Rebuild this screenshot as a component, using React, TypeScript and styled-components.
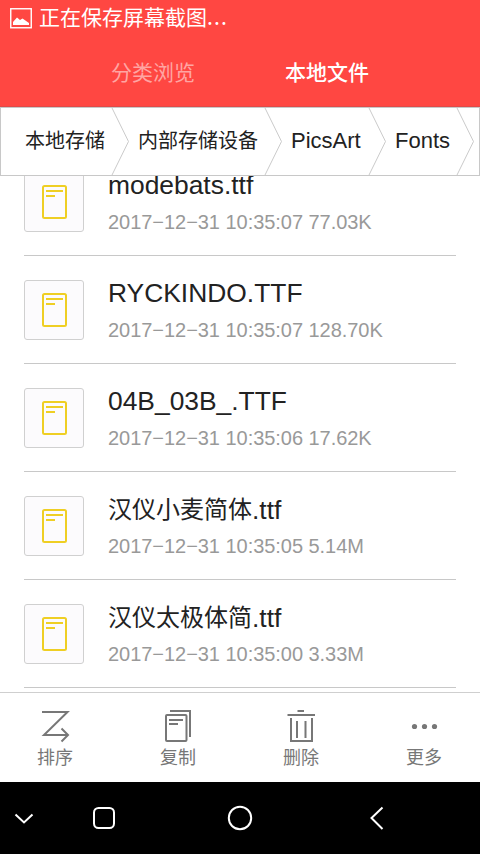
import React from "react";
import styled, { createGlobalStyle } from "styled-components";

const GlobalStyle = createGlobalStyle`
  * { box-sizing: border-box; }
  body { margin: 0; background: #fff; }
`;

const Screen = styled.div`
  width: 480px;
  height: 854px;
  display: flex;
  flex-direction: column;
  overflow: hidden;
  background: #fff;
  color: #222;
  font-family: "Liberation Sans", "Noto Sans CJK SC", sans-serif;
  white-space: nowrap;
`;

const Header = styled.header`
  flex: none;
  height: 107px;
  background: #ff4742;
  border-bottom: 1px solid #e04a48;
  color: #fff;
  font-family: "Noto Sans CJK SC", sans-serif;
  font-size: 21px;
`;

const StatusBar = styled.div`
  height: 35px;
  display: flex;
  align-items: flex-start;
  gap: 7px;
  padding-left: 10px;
  line-height: 32px;

  svg {
    margin-top: 8px;
  }
`;

const Dots = styled.span`
  letter-spacing: 1.2px;
`;

const Tabs = styled.nav`
  display: flex;
  gap: 90px;
  padding-left: 111px;
  line-height: 72px;
`;

const Tab = styled.span<{ $active?: boolean }>`
  width: 84px;
  color: ${(p) => (p.$active ? "#fff" : "#ffa5a2")};
  font-weight: ${(p) => (p.$active ? 500 : 400)};
`;

const Breadcrumb = styled.div`
  flex: none;
  height: 69px;
  display: flex;
  gap: 9px;
  border: 1px solid #c8c8c8;
  padding-left: 24px;
`;

const Crumb = styled.div<{ $width: number }>`
  flex: none;
  display: flex;
  justify-content: space-between;
  width: ${(p) => p.$width}px;
  line-height: 66px;
`;

const Latin = styled.span<{ $size: number }>`
  font-family: "Liberation Sans", sans-serif;
  font-size: ${(p) => p.$size}px;
`;

const Han = styled.span<{ $size: number }>`
  font-family: "Noto Sans CJK SC", sans-serif;
  font-size: ${(p) => p.$size}px;
  position: relative;
  top: -1px;
`;

const List = styled.main`
  flex: none;
  height: 516px;
  overflow: hidden;
  padding: 0 24px;
`;

const Rows = styled.div`
  margin-top: -28px;
`;

const Row = styled.div`
  height: 108px;
  display: flex;
  gap: 24px;
  padding-top: 24px;
  border-bottom: 1px solid #c8c8c8;
`;

const Thumb = styled.div`
  flex: none;
  width: 60px;
  height: 60px;
  border: 1px solid #d0d0d0;
  border-radius: 3px;
  background: #fcfbfd;
  display: flex;
  align-items: center;
  justify-content: center;
`;

const Info = styled.div`
  display: flex;
  flex-direction: column;
`;

const Name = styled.div`
  height: 30px;
  margin-top: -2px;
  line-height: 30px;
`;

const Meta = styled.div`
  margin-top: 10px;
  height: 24px;
  line-height: 24px;
  font-size: 20px;
  letter-spacing: -0.04px;
  color: #999;
`;

const Toolbar = styled.footer`
  flex: none;
  height: 90px;
  border-top: 1px solid #cfcfcf;
  display: flex;
  justify-content: space-between;
  padding: 15px 34px 0 33px;
`;

const Tool = styled.div`
  width: 44px;
  display: flex;
  flex-direction: column;
  align-items: center;
  color: #777;
  font-family: "Noto Sans CJK SC", sans-serif;
  font-size: 18px;
  line-height: 24px;
`;

const NavBar = styled.div`
  flex: none;
  height: 72px;
  background: #000;
  display: flex;
  align-items: center;
  padding-left: 9px;
`;

const NavButton = styled.div<{ $gap: number }>`
  flex: none;
  width: 30px;
  height: 30px;
  margin-right: ${(p) => p.$gap}px;
`;

const NavIcon = ({ children }: { children: React.ReactNode }) => (
  <svg width="30" height="30" viewBox="0 0 30 30" fill="none" stroke="#fff" strokeWidth="2" display="block">
    {children}
  </svg>
);

const ToolIcon = ({ children }: { children: React.ReactNode }) => (
  <svg width="36" height="36" viewBox="0 0 36 36" fill="none" stroke="#777" strokeWidth="2" display="block">
    {children}
  </svg>
);

const Chevron = () => (
  <svg width="18" height="67" viewBox="0 0 18 67" fill="none" stroke="#cacaca" strokeWidth="1" display="block">
    <path d="M1 0 L17.5 33.5 L1 67" />
  </svg>
);

const FileIcon = () => (
  <svg width="26" height="36" viewBox="0 0 26 36" fill="none" stroke="#efcf24" strokeWidth="2" display="block">
    <rect x="2" y="2" width="23" height="32" rx="1.5" />
    <path d="M5 7H22M5 12H14" />
  </svg>
);

const PictureIcon = () => (
  <svg width="22" height="21" viewBox="0 0 22 21" display="block">
    <rect x="0.75" y="0.75" width="20.5" height="19" fill="none" stroke="#fff" strokeWidth="1.4" />
    <path d="M3 17V14L7 9.5L10 12L12.5 10.5L19 15V17Z" fill="#fff" />
  </svg>
);

const isHan = (s: string) => /[\u4e00-\u9fff]/.test(s);

const Mixed = ({ text, size }: { text: string; size: number }) => (
  <>
    {(text.match(/[\u4e00-\u9fff]+|[^\u4e00-\u9fff]+/g) ?? []).map((part) =>
      isHan(part) ? (
        <Han key={part} $size={size}>{part}</Han>
      ) : (
        <Latin key={part} $size={size * 1.1}>{part}</Latin>
      )
    )}
  </>
);

const crumbs = [
  { label: "本地存储", width: 104 },
  { label: "内部存储设备", width: 144 },
  { label: "PicsArt", width: 95 },
  { label: "Fonts", width: 79 },
];

const files = [
  { name: "modebats.ttf", meta: "2017−12−31 10:35:07 77.03K" },
  { name: "RYCKINDO.TTF", meta: "2017−12−31 10:35:07 128.70K" },
  { name: "04B_03B_.TTF", meta: "2017−12−31 10:35:06 17.62K" },
  { name: "汉仪小麦简体.ttf", meta: "2017−12−31 10:35:05 5.14M" },
  { name: "汉仪太极体简.ttf", meta: "2017−12−31 10:35:00 3.33M" },
];

export default function App() {
  return (
    <Screen>
      <GlobalStyle />
      <Header>
        <StatusBar>
          <PictureIcon />
          <span>正在保存屏幕截图<Dots>...</Dots></span>
        </StatusBar>
        <Tabs>
          <Tab>分类浏览</Tab>
          <Tab $active>本地文件</Tab>
        </Tabs>
      </Header>
      <Breadcrumb>
        {crumbs.map((c) => (
          <Crumb key={c.label} $width={c.width}>
            <Mixed text={c.label} size={20} />
            <Chevron />
          </Crumb>
        ))}
      </Breadcrumb>
      <List>
        <Rows>
          {files.map((f) => (
            <Row key={f.name}>
              <Thumb>
                <FileIcon />
              </Thumb>
              <Info>
                <Name>
                  <Mixed text={f.name} size={24} />
                </Name>
                <Meta>{f.meta}</Meta>
              </Info>
            </Row>
          ))}
        </Rows>
      </List>
      <Toolbar>
        <Tool>
          <ToolIcon>
            <path d="M5 4H30.5L7 27H30M24.5 20.5L31 27L24.5 33.5" />
          </ToolIcon>
          排序
        </Tool>
        <Tool>
          <ToolIcon>
            <rect x="6" y="7" width="20.5" height="26" rx="1" />
            <path d="M10 3H30V29M9 12H23M9 16H18" />
          </ToolIcon>
          复制
        </Tool>
        <Tool>
          <ToolIcon>
            <path d="M14.5 3H21M4.5 7H32M8 10V33H29V10M14 13V30M22.5 13V30" />
          </ToolIcon>
          删除
        </Tool>
        <Tool>
          <ToolIcon>
            <g fill="#777" stroke="none">
              <circle cx="8.5" cy="18.5" r="2.6" />
              <circle cx="18.5" cy="18.5" r="2.6" />
              <circle cx="28.5" cy="18.5" r="2.6" />
            </g>
          </ToolIcon>
          更多
        </Tool>
      </Toolbar>
      <NavBar>
        <NavButton $gap={50}>
          <NavIcon>
            <path d="M6.5 11.5L15 19.5L23.5 11.5" />
          </NavIcon>
        </NavButton>
        <NavButton $gap={106}>
          <NavIcon>
            <rect x="5" y="5" width="20" height="20" rx="4.5" />
          </NavIcon>
        </NavButton>
        <NavButton $gap={106}>
          <NavIcon>
            <circle cx="15" cy="15" r="11.2" />
          </NavIcon>
        </NavButton>
        <NavButton $gap={0}>
          <NavIcon>
            <path d="M21.5 4.5L10.5 15L21.5 26" />
          </NavIcon>
        </NavButton>
      </NavBar>
    </Screen>
  );
}
